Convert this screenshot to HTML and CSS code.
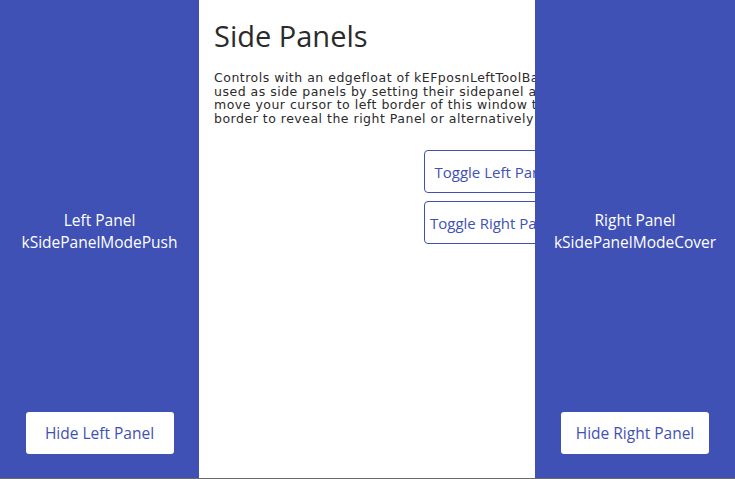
FILE: index.html
```html
<!DOCTYPE html>
<html>
<head>
    <title>Side Panels</title>
    <link rel="stylesheet" href="styles.css">
</head>
<body>
    <div class="window">
        <aside class="panel panel-left">
            <div class="panel-label">
                <div>Left Panel</div>
                <div>kSidePanelModePush</div>
            </div>
            <button class="hide-btn">Hide Left Panel</button>
        </aside>
        <main class="content">
            <h1>Side Panels</h1>
            <p class="intro">Controls with an edgefloat of kEFposnLeftToolBar or kEFposnRightToolBar can be<br>used as side panels by setting their sidepanel attribute. To see this in action<br>move your cursor to left border of this window to reveal the left Panel or to the right<br>border to reveal the right Panel or alternatively use the buttons below.</p>
            <div class="toggles">
                <button class="toggle-btn">Toggle Left Panel</button>
                <button class="toggle-btn">Toggle Right Panel</button>
            </div>
        </main>
        <aside class="panel panel-right">
            <div class="panel-label">
                <div>Right Panel</div>
                <div>kSidePanelModeCover</div>
            </div>
            <button class="hide-btn">Hide Right Panel</button>
        </aside>
    </div>
</body>
</html>
```

FILE: styles.css
```css
:root {
    --panel-color: #3f51b5;
    --text-color: #2b2b2b;
    --bg-color: #ffffff;
}

body {
    margin: 0;
    background-color: var(--bg-color);
    font-family: 'Open Sans', 'Noto Sans', sans-serif;
    overflow: hidden;
}

.window {
    position: relative;
    display: flex;
    height: 478px;
    border-bottom: 1px solid #6b6b6b;
    overflow: hidden;
}

.panel {
    width: 199px;
    flex-shrink: 0;
    background-color: var(--panel-color);
    color: #ffffff;
    display: flex;
    flex-direction: column;
    align-items: center;
}

/* right panel covers the content instead of pushing it */
.panel-right {
    position: absolute;
    top: 0;
    right: 0;
    bottom: 0;
    width: 200px;
}

.panel-label {
    flex: 1;
    display: flex;
    flex-direction: column;
    justify-content: center;
    align-items: center;
    font-size: 15.5px;
    line-height: 22px;
    padding-top: 50px;
}

.hide-btn {
    width: 148px;
    height: 42px;
    margin-bottom: 24px;
    background-color: #ffffff;
    color: var(--panel-color);
    border: none;
    border-radius: 3px;
    font-family: inherit;
    font-size: 15.5px;
}

.content {
    flex: 1;
    padding: 0 15px;
    color: var(--text-color);
    min-width: 0;
}

h1 {
    margin: 17px 0 0 0;
    font-weight: 400;
    font-size: 29px;
    line-height: 38px;
}

.intro {
    margin: 16px 0 0 0;
    font-family: 'DejaVu Sans', Verdana, sans-serif;
    font-size: 12.5px;
    letter-spacing: 0.5px;
    line-height: 13.5px;
    white-space: nowrap;
    height: 60px;
    overflow: hidden;
}

.toggles {
    display: flex;
    flex-direction: column;
    gap: 8px;
    margin: 19px 0 0 210px;
}

.toggle-btn {
    width: 140px;
    height: 43px;
    background-color: #ffffff;
    color: var(--panel-color);
    border: 1px solid var(--panel-color);
    border-radius: 4px;
    font-family: inherit;
    font-size: 15px;
    text-align: center;
    padding: 0;
}
```
